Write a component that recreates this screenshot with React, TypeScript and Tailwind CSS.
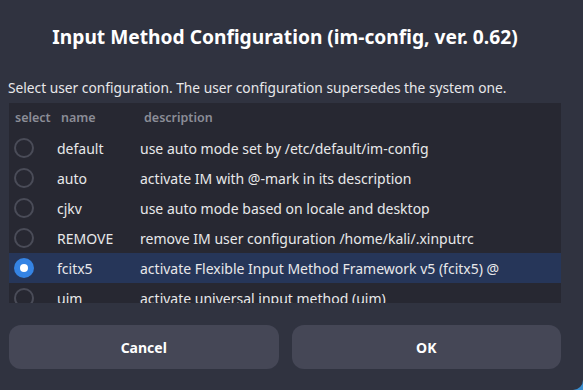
import React from "react";

const rows = [
  { name: "default", desc: "use auto mode set by /etc/default/im-config" },
  { name: "auto", desc: "activate IM with @-mark in its description" },
  { name: "cjkv", desc: "use auto mode based on locale and desktop" },
  { name: "REMOVE", desc: "remove IM user configuration /home/kali/.xinputrc" },
  { name: "fcitx5", desc: "activate Flexible Input Method Framework v5 (fcitx5) @", selected: true },
  { name: "uim", desc: "activate universal input method (uim)" },
];

export default function App() {
  return (
    <div className="w-[583px] h-[390px] bg-[#3a8fd0] overflow-hidden">
      <div
        className="w-[583px] h-[390px] bg-[#303340] rounded-br-[10px] text-[#e8e8ea] overflow-hidden"
        style={{ fontFamily: '"Noto Sans", sans-serif' }}
      >
        <div className="w-[570px] flex flex-col px-[9px]">
          <div className="h-[78px] flex items-center justify-center pb-[5px]">
            <h1 className="text-[19.2px] font-bold leading-none text-white">
              Input Method Configuration (im-config, ver. 0.62)
            </h1>
          </div>
          <p className="text-[13.75px] leading-[20px] h-[25px] text-[#e8e8ea] -ml-[1px]">
            Select user configuration. The user configuration supersedes the system one.
          </p>
          <div className="h-[200px] bg-[#272832] overflow-hidden">
            <div className="h-[30px] flex items-center text-[12.5px] font-semibold text-[#8b8d97]">
              <div className="w-[52px] pl-[6px]">select</div>
              <div className="w-[83px]">name</div>
              <div>description</div>
            </div>
            {rows.map((r) => (
              <div
                key={r.name}
                className={`h-[30px] flex items-center text-[14px] ${r.selected ? "bg-[#263659]" : ""}`}
              >
                <div className="w-[48px] pl-[5px] flex items-center">
                  {r.selected ? (
                    <div className="w-[20px] h-[20px] rounded-full bg-[#3584e4] flex items-center justify-center">
                      <div className="w-[8px] h-[8px] rounded-full bg-white" />
                    </div>
                  ) : (
                    <div className="w-[20px] h-[20px] rounded-full border-2 border-[#4a4c58]" />
                  )}
                </div>
                <div className="w-[83px] text-[#e8e8ea]">{r.name}</div>
                <div className="text-[#e8e8ea] whitespace-nowrap">{r.desc}</div>
              </div>
            ))}
          </div>
          <div className="flex gap-[13px] mt-[22px]">
            <button className="flex-1 h-[44px] rounded-[12px] bg-[#454756] text-[14px] font-bold text-white">
              Cancel
            </button>
            <button className="flex-1 h-[44px] rounded-[12px] bg-[#454756] text-[14px] font-bold text-white">
              OK
            </button>
          </div>
        </div>
      </div>
    </div>
  );
}
